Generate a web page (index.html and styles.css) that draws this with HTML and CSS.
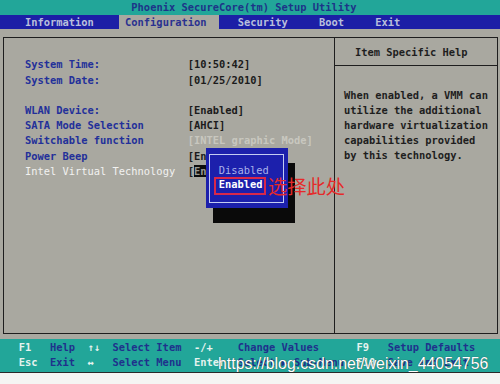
FILE: index.html
```html
<!DOCTYPE html>
<html>
<head>
<meta charset="utf-8">
<link rel="stylesheet" href="styles.css">
</head>
<body>
<div class="screen">
  <div class="titlebar"><span class="title">Phoenix SecureCore(tm) Setup Utility</span></div>
  <div class="menubar">
    <span class="menu-item m-info">Information</span>
    <span class="menu-item m-conf active">Configuration</span>
    <span class="menu-item m-sec">Security</span>
    <span class="menu-item m-boot">Boot</span>
    <span class="menu-item m-exit">Exit</span>
  </div>
  <div class="main">
    <div class="frame">
      <div class="left">
        <div class="row"><span class="label">System Time:</span><span class="value">[10:50:42]</span></div>
        <div class="row"><span class="label">System Date:</span><span class="value">[01/25/2010]</span></div>
        <div class="row blank"></div>
        <div class="row"><span class="label">WLAN Device:</span><span class="value">[Enabled]</span></div>
        <div class="row"><span class="label">SATA Mode Selection</span><span class="value">[AHCI]</span></div>
        <div class="row"><span class="label">Switchable function</span><span class="value dim">[INTEL graphic Mode]</span></div>
        <div class="row"><span class="label">Power Beep</span><span class="value">[Enabled]</span></div>
        <div class="row selected"><span class="label">Intel Virtual Technology</span><span class="value">[<span class="hl">Enabled]</span></span></div>
      </div>
      <div class="right">
        <div class="help-head">Item Specific Help</div>
        <div class="help-text">When enabled, a VMM can<br>utilize the additional<br>hardware virtualization<br>capabilities provided<br>by this technology.</div>
      </div>
    </div>
  </div>
  <div class="footer">
    <div class="frow">
      <span class="key c1">F1</span><span class="desc c2">Help</span>
      <span class="key c3">↑↓</span><span class="desc c4">Select Item</span>
      <span class="key c5">-/+</span><span class="desc c6">Change Values</span>
      <span class="key c7">F9</span><span class="desc">Setup Defaults</span>
    </div>
    <div class="frow">
      <span class="key c1">Esc</span><span class="desc c2">Exit</span>
      <span class="key c3">↔</span><span class="desc c4">Select Menu</span>
      <span class="key c5">Enter</span><span class="desc c6">Select ▶ Sub-Menu</span>
      <span class="key c7">F10</span><span class="desc">Save and Exit</span>
    </div>
  </div>

  <div class="popup">
    <div class="popup-inner">
      <div class="opt">Disabled</div>
      <div class="opt current">Enabled</div>
    </div>
  </div>
  <div class="mark"></div>
  <div class="note">选择此处</div>
  <div class="watermark">https://blog.csdn.net/weixin_44054756</div>
</div>
</body>
</html>
```

FILE: styles.css
```css
html, body {
  margin: 0;
  padding: 0;
  background: #f5f5f3;
}

.screen {
  position: relative;
  width: 500px;
  height: 372px;
  overflow: hidden;
  display: flex;
  flex-direction: column;
  font-family: "DejaVu Sans Mono", "Liberation Mono", monospace;
  font-weight: bold;
  font-size: 10.4px;
  line-height: 15.2px;
  white-space: nowrap;
  border-bottom: 1px solid #2a2a2a;
}

.titlebar {
  height: 14.5px;
  line-height: 14.5px;
  background: #22a699;
  color: #1d3488;
  padding-left: 21ch;
}

.menubar {
  height: 14.5px;
  line-height: 14.5px;
  background: #1c1fa6;
  color: #b9bfdc;
  display: flex;
}

.menu-item { display: block; }
.m-info { margin-left: 4ch; width: 15ch; }
.m-conf { width: 15ch; padding-left: 1ch; }
.m-sec { margin-left: 3ch; width: 13ch; }
.m-boot { width: 9ch; }
.menu-item.active {
  background: #a9a8a0;
  color: #2a3290;
}

.main {
  flex: 1;
  background: #a9a8a0;
  padding: 8px 2px 5px 3px;
  display: flex;
}

.frame {
  flex: 1;
  border: 1px solid #1e1e1e;
  display: grid;
  grid-template-columns: 330px 1fr;
}

.left {
  padding: 19.4px 0 0 21px;
}

.row {
  display: grid;
  grid-template-columns: 26ch 1fr;
  height: 15.2px;
}

.label { color: #23309a; }
.value { color: #1b1b1b; }
.value.dim { color: #c8c7bf; }
.selected .label { color: #f2f2f0; font-weight: normal; }
.hl { background: #0c0c0c; color: #9a9a94; }

.right {
  border-left: 1px solid #1e1e1e;
  display: flex;
  flex-direction: column;
}

.help-head {
  height: 28px;
  box-sizing: border-box;
  padding: 6.7px 0 0 20px;
  border-bottom: 1px solid #1e1e1e;
  color: #1e1e1e;
}

.help-text {
  padding: 22px 0 0 9px;
  color: #1e1e1e;
  line-height: 15px;
}

.footer {
  height: 33px;
  box-sizing: border-box;
  background: #22a699;
  padding: 0.7px 0 0 3ch;
}

.frow {
  display: flex;
  height: 15px;
  line-height: 15px;
}

.key { color: #e6f3ef; }
.desc { color: #1f318c; }
.c1 { width: 5ch; }
.c2 { width: 6ch; }
.c3 { width: 4ch; }
.c4 { width: 13ch; }
.c5 { width: 7ch; }
.c6 { width: 19ch; }
.c7 { width: 5ch; }

.popup {
  position: absolute;
  left: 206px;
  top: 148px;
  width: 82px;
  height: 60px;
  box-sizing: border-box;
  background: #1c20ac;
  box-shadow: 7px 15px 0 #0a0a0a;
  padding: 6px 4px 5px 3px;
  display: flex;
}

.popup-inner {
  flex: 1;
  border: 1px solid #c4ccf2;
  padding: 8px 0 0 8.7px;
}

.opt {
  height: 14.4px;
  line-height: 14.4px;
  color: #a9b2ea;
  font-weight: normal;
}

.opt.current {
  color: #ffffff;
  font-weight: bold;
}

.mark {
  position: absolute;
  left: 214px;
  top: 177px;
  width: 52px;
  height: 18px;
  box-sizing: border-box;
  border: 2px solid #d8284a;
}

.note {
  position: absolute;
  left: 268px;
  top: 176px;
  font-family: "Noto Sans CJK SC", sans-serif;
  font-weight: normal;
  font-size: 19.3px;
  line-height: 20px;
  color: #e52a2a;
}

.watermark {
  position: absolute;
  left: 218px;
  top: 354px;
  font-family: "Liberation Sans", Arial, sans-serif;
  font-weight: normal;
  font-size: 15.9px;
  line-height: 20px;
  color: #ffffff;
  text-shadow: 0 0 1px #333;
}
```
